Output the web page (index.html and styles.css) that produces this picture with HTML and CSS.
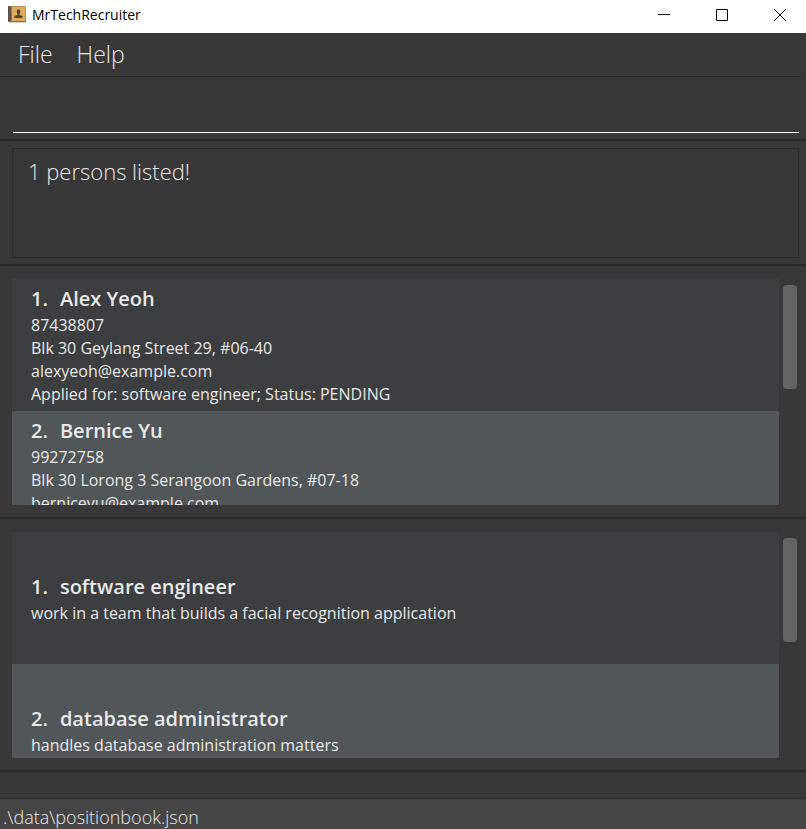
FILE: index.html
```html
<!DOCTYPE html>
<html lang="en">
<head>
<meta charset="utf-8">
<meta name="viewport" content="width=device-width, initial-scale=1">
<title>MrTechRecruiter</title>
<link rel="stylesheet" href="styles.css">
</head>
<body>
<header class="titlebar">
  <svg class="app-icon" viewBox="0 0 18 17" aria-hidden="true">
    <rect x="0" y="0" width="18" height="16" rx="1" fill="#b98b45"/>
    <rect x="4" y="1" width="13" height="14" fill="#dcab60"/>
    <rect x="0" y="0" width="3" height="16" rx="1" fill="#5d514a"/>
    <rect x="3" y="0" width="1" height="16" fill="#9b7a4c"/>
    <rect x="0" y="15" width="18" height="1" fill="#8f7043"/>
    <rect x="1" y="16" width="17" height="1" fill="#d5d0c8"/>
    <ellipse cx="10.500" cy="5.500" rx="1.800" ry="2.200" fill="#56431f"/>
    <path d="M9.500 7h2v2l3 1v2h-8v-2l3-1z" fill="#56431f"/>
  </svg>
  <h1 class="app-name">MrTechRecruiter</h1>
  <div class="window-controls">
    <button class="window-button" aria-label="Minimize"><svg viewBox="0 0 14 14"><path d="M1 6.500h12"/></svg></button>
    <button class="window-button" aria-label="Maximize"><svg viewBox="0 0 14 14"><path d="M1.500 1.500h11v11h-11z"/></svg></button>
    <button class="window-button" aria-label="Close"><svg viewBox="0 0 14 14"><path d="M1 1l12 12M13 1l-12 12"/></svg></button>
  </div>
</header>
<nav class="menu">
  <button class="menu-item">File</button>
  <button class="menu-item">Help</button>
</nav>
<main class="content">
  <section class="pane command-pane">
    <input class="command" type="text" aria-label="Command">
  </section>
  <section class="pane result-pane">
    <output class="result">1 persons listed!</output>
  </section>
  <section class="pane list-pane">
    <ol class="list">
      <li class="card person">
        <h2 class="name"><span class="index">1.</span>Alex Yeoh</h2>
        <p>87438807</p>
        <p>Blk 30 Geylang Street 29, #06-40</p>
        <p>alexyeoh@example.com</p>
        <p>Applied for: software engineer; Status: PENDING</p>
      </li>
      <li class="card person">
        <h2 class="name"><span class="index">2.</span>Bernice Yu</h2>
        <p>99272758</p>
        <p>Blk 30 Lorong 3 Serangoon Gardens, #07-18</p>
        <p>berniceyu@example.com</p>
      </li>
    </ol>
    <div class="scrollbar"><div class="thumb"></div></div>
  </section>
  <section class="pane list-pane">
    <ol class="list">
      <li class="card">
        <h2 class="name"><span class="index">1.</span>software engineer</h2>
        <p>work in a team that builds a facial recognition application</p>
      </li>
      <li class="card">
        <h2 class="name"><span class="index">2.</span>database administrator</h2>
        <p>handles database administration matters</p>
      </li>
    </ol>
    <div class="scrollbar"><div class="thumb"></div></div>
  </section>
</main>
<footer class="status">.\data\positionbook.json</footer>
</body>
</html>
```
FILE: styles.css
```css
* {
  box-sizing: border-box;
}

body {
  display: flex;
  flex-direction: column;
  height: 100vh;
  margin: 0;
  overflow: hidden;
  background: #383838;
  color: #e8e8e8;
  font-family: "Open Sans", "Noto Sans", sans-serif;
}

h1, h2, p, ol {
  margin: 0;
  padding: 0;
}

button {
  border: 0;
  background: none;
  color: inherit;
  font: inherit;
}

.titlebar {
  display: flex;
  flex: none;
  align-items: center;
  height: 33px;
  padding: 0 3px 4px 8px;
  background: #fff;
  color: #000;
}

.app-icon {
  width: 18px;
  height: 17px;
  margin-right: 6px;
}

.app-name {
  font-size: 14px;
  font-weight: 400;
}

.window-controls {
  display: flex;
  gap: 12px;
  margin-left: auto;
}

.window-button {
  display: grid;
  place-items: center;
  width: 46px;
  height: 26px;
  padding: 0;
}

.window-button svg {
  width: 14px;
  height: 14px;
  fill: none;
  stroke: #000;
}

.menu {
  display: flex;
  flex: none;
  gap: 24px;
  height: 44px;
  padding: 0 18px 2px;
  border-bottom: 1px solid #2b2b2b;
}

.menu-item {
  padding: 0;
  font-size: 23px;
  font-weight: 300;
}

.content {
  display: flex;
  flex: 1;
  flex-direction: column;
  min-height: 0;
  padding-bottom: 26px;
}

.pane {
  display: flex;
  flex: none;
  border-bottom: 2px solid #2a2a2a;
}

.command-pane {
  padding: 8px 7px 6px 13px;
}

.command {
  flex: 1;
  min-width: 0;
  height: 48px;
  padding: 0 4px;
  border: 0;
  border-bottom: 1px solid #fff;
  outline: 0;
  background: none;
  color: #fff;
  font: inherit;
  font-size: 22px;
  font-weight: 300;
}

.result-pane {
  padding: 7px 7px 6px 12px;
}

.result {
  flex: 1;
  height: 110px;
  padding: 7px 15px;
  border: 1px solid #2b2b2b;
  font-size: 22px;
  font-weight: 300;
  line-height: 30px;
}

.list-pane {
  flex: 1;
  min-height: 0;
  padding: 13px 9px 12px 12px;
}

.list {
  flex: 1;
  overflow: hidden;
  list-style: none;
}

.card {
  display: flex;
  flex-direction: column;
  justify-content: center;
  height: 132px;
  padding: 1px 19px 0;
  background: #3c3e3f;
  font-size: 16px;
  line-height: 23px;
}

.person {
  justify-content: flex-start;
  padding-top: 5px;
}

.card:nth-child(even) {
  background: #515658;
}

.name {
  display: flex;
  gap: 12px;
  font-size: 20px;
  font-weight: 600;
  line-height: 30px;
}

.scrollbar {
  width: 18px;
  padding: 6px 0 0 4px;
}

.thumb {
  width: 14px;
  height: 104px;
  border-radius: 4px;
  background: #646464;
}

.status {
  flex: none;
  height: 31px;
  padding: 6px 3px 0;
  border-top: 1px solid #2a2a2a;
  background: #454545;
  font-size: 18px;
  font-weight: 300;
  line-height: 24px;
}
```
